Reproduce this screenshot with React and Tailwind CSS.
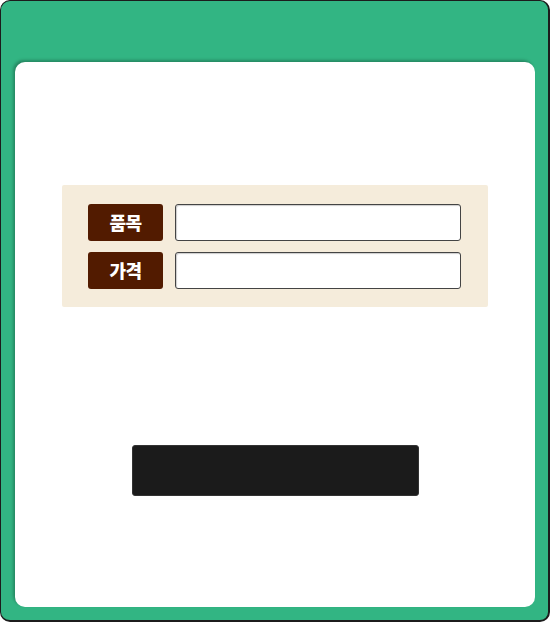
export default function App() {
    const rows = ['품목', '가격'];

    return (
        <div className="w-[550px] h-[622px] bg-[#32b583] rounded-[10px] border-t border-l border-r-2 border-b-2 border-[#1c1c1c] flex flex-col pt-[61px] pl-[14px] pr-[13px] pb-[13px]" style={{ fontFamily: '"Noto Sans CJK KR", "Noto Sans", sans-serif' }}>
            {/* inner white panel */}
            <div className="flex-1 bg-white rounded-[10px] shadow-[-2px_-2px_3px_rgba(0,0,0,0.25)] flex flex-col items-center pt-[123px]">
                <div className="w-[426px] bg-[#f5ecdb] rounded-[2px] pt-[19px] pb-[18px] pl-[26px] flex flex-col gap-[11px]">
                    {rows.map((label) => (
                        <div key={label} className="flex items-center gap-[12px]">
                            <div className="w-[75px] h-[37px] bg-[#521b00] rounded-[3px] flex items-center justify-center text-white text-[18px] font-black tracking-tight">
                                {label}
                            </div>
                            <input
                                type="text"
                                className="w-[286px] h-[37px] bg-white border border-[#444] rounded-[3px] shadow-[inset_1px_1px_1px_rgba(0,0,0,0.2)] outline-none px-2"
                            />
                        </div>
                    ))}
                </div>
                <button className="mt-[138px] w-[287px] h-[51px] bg-[#1b1b1b] rounded-[3px] border border-[#333]"></button>
            </div>
        </div>
    );
}
